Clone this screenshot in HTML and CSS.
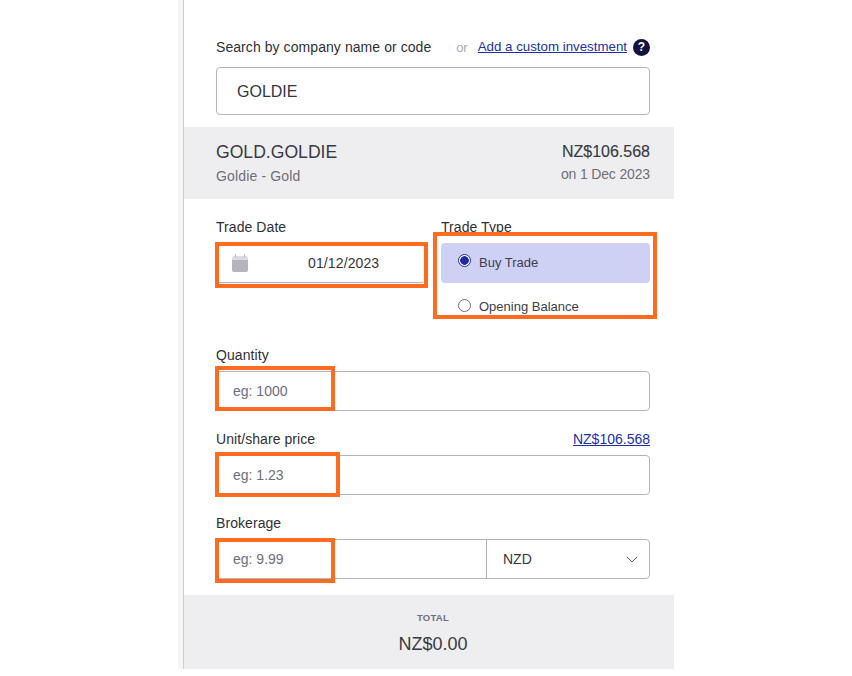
FILE: index.html
```html
<!DOCTYPE html>
<html lang="en">
<head>
<meta charset="utf-8">
<title>Add trade</title>
<link rel="stylesheet" href="styles.css">
</head>
<body>
<main class="panel">
  <section class="section search">
    <div class="label-row">
      <label class="label">Search by company name or code</label>
      <div class="alt">
        <span class="or">or</span>
        <a class="link" href="#">Add a custom investment</a>
        <span class="help">?</span>
      </div>
    </div>
    <div class="field field-search">GOLDIE</div>
  </section>

  <section class="band">
    <div>
      <div class="code">GOLD.GOLDIE</div>
      <div class="sub sub-name">Goldie - Gold</div>
    </div>
    <div class="right">
      <div class="price">NZ$106.568</div>
      <div class="sub sub-date">on 1 Dec 2023</div>
    </div>
  </section>

  <section class="section form">
    <div class="cols">
      <div class="col-date">
        <div class="label">Trade Date</div>
        <div class="date">
          <svg class="cal" width="18" height="20" viewBox="0 0 18 20" aria-hidden="true">
            <path d="M1 5a2 2 0 0 1 2-2h12a2 2 0 0 1 2 2v2H1z" fill="#dcdce1"/>
            <path d="M1 7h16v10a2 2 0 0 1-2 2H3a2 2 0 0 1-2-2z" fill="#b3b4bd"/>
            <rect x="4" y="1" width="1" height="3.5" fill="#b3b4bd"/>
            <rect x="13" y="1" width="1" height="3.5" fill="#b3b4bd"/>
          </svg>
          <span class="date-value">01/12/2023</span>
        </div>
      </div>
      <div class="col-type">
        <div class="label">Trade Type</div>
        <div class="radio radio-on"><span class="dot dot-on"></span><span class="radio-text">Buy Trade</span></div>
        <div class="radio radio-off"><span class="dot"></span><span class="radio-text">Opening Balance</span></div>
      </div>
    </div>

    <div class="label qty-label">Quantity</div>
    <div class="field field-num">eg: 1000</div>

    <div class="label-row price-row">
      <div class="label">Unit/share price</div>
      <a class="link link-price" href="#">NZ$106.568</a>
    </div>
    <div class="field field-num">eg: 1.23</div>

    <div class="label broker-label">Brokerage</div>
    <div class="field broker">
      <div class="broker-input">eg: 9.99</div>
      <div class="currency">NZD
        <svg class="chev" width="12" height="7" viewBox="0 0 12 7" aria-hidden="true"><path d="M.7.7 6 6l5.3-5.3" fill="none" stroke="#55566a" stroke-width="1"/></svg>
      </div>
    </div>
  </section>

  <section class="total">
    <div class="total-label">TOTAL</div>
    <div class="total-value">NZ$0.00</div>
  </section>

  <div class="mark mark-date"></div>
  <div class="mark mark-type"></div>
  <div class="mark mark-qty"></div>
  <div class="mark mark-unit"></div>
  <div class="mark mark-broker"></div>
</main>
</body>
</html>
```
FILE: styles.css
```css
* { box-sizing: border-box; }
html, body { margin: 0; background: #fff; }
body {
  height: 676px;
  overflow: hidden;
  font-family: "Liberation Sans", Arial, sans-serif;
  color: #35353f;
}
.panel {
  position: absolute;
  left: 178px;
  top: 0;
  width: 496px;
  height: 669px;
  border-left: 6px solid #f6f6f7;
  display: flex;
  flex-direction: column;
}
.panel::before {
  content: "";
  position: absolute;
  left: -1px;
  top: 0;
  bottom: 0;
  width: 1px;
  background: #cdcdd3;
}
.section { padding: 0 24px 0 32px; }
.search { padding-top: 38px; height: 127px; }
.label-row { display: flex; justify-content: space-between; align-items: center; height: 18px; }
.label { font-size: 14px; line-height: 18px; color: #2f2f37; letter-spacing: 0.005em; }
.alt { display: flex; align-items: center; }
.or { font-size: 13px; color: #a9a9b2; margin-right: 10px; }
.link { font-size: 13.3px; line-height: 18px; color: #2230a8; text-decoration: underline; }
.link-price { font-size: 14px; }
.help {
  width: 17px;
  height: 17px;
  margin-left: 6px;
  border-radius: 50%;
  background: #12123f;
  color: #fff;
  font-size: 12px;
  font-weight: 700;
  line-height: 17px;
  text-align: center;
}
.field {
  border: 1px solid #b3b3bf;
  border-radius: 4px;
  background: #fff;
}
.field-search {
  height: 48px;
  margin-top: 11px;
  padding-left: 20px;
  font-size: 16px;
  line-height: 47px;
  color: #35353f;
}
.band {
  height: 72px;
  padding: 14px 24px 0 32px;
  background: #eeeef0;
  display: flex;
  justify-content: space-between;
}
.code { font-size: 17.6px; line-height: 22px; color: #3a3a44; }
.price { font-size: 16px; line-height: 20px; padding-top: 1px; color: #3a3a44; -webkit-text-stroke: 0.15px #3a3a44; }
.sub { font-size: 14px; line-height: 18px; color: #6e6e78; }
.sub-name { margin-top: 4px; letter-spacing: 0.15px; }
.sub-date { margin-top: 3px; letter-spacing: -0.15px; }
.right { text-align: right; }
.form { flex: 1; padding-top: 19px; }
.cols { display: flex; height: 128px; }
.col-date { width: 225px; }
.col-type { width: 209px; }
.date {
  height: 40px;
  margin-top: 7px;
  width: 209px;
  border: 1px solid #b3b3bf;
  border-top-color: #fff;
  border-left-color: #fff;
  border-right-color: #fff;
  border-radius: 4px;
  display: flex;
  align-items: center;
  position: relative;
}
.cal { margin-left: 14px; }
.date-value { position: absolute; left: 91px; font-size: 14px; letter-spacing: 0.12px; color: #35353f; }
.radio { display: flex; align-items: center; font-size: 13px; color: #3e3e4c; height: 40px; border-radius: 4px; padding-left: 17px; }
.radio-on { background: #ced1f4; margin-top: 7px; padding-bottom: 5px; }
.radio-on .radio-text { position: relative; top: 2px; }
.radio-off { height: 18px; margin-top: 13px; }
.radio-off .radio-text { position: relative; top: 1px; }
.dot {
  width: 13px;
  height: 13px;
  margin-right: 8px;
  border: 1px solid #6f6f78;
  border-radius: 50%;
  background: #fff;
  flex: none;
}
.dot-on {
  border-color: #2230a8;
  background: radial-gradient(circle, #1c2aa5 0 4px, #fff 4.6px);
}
.qty-label { height: 18px; }
.field-num {
  height: 40px;
  margin-top: 7px;
  padding-left: 16px;
  font-size: 14px;
  line-height: 38px;
  color: #6d6d80;
}
.price-row { margin-top: 19px; }
.broker-label { margin-top: 19px; }
.broker { display: flex; height: 40px; margin-top: 7px; }
.broker-input { width: 270px; padding-left: 16px; font-size: 14px; line-height: 38px; color: #6d6d80; border-right: 1px solid #b3b3bf; }
.currency { flex: 1; display: flex; align-items: center; justify-content: space-between; padding: 0 11px 0 16px; font-size: 14px; color: #35353f; }
.total { height: 74px; padding: 17px 0 0 8px; background: #eeeef0; text-align: center; }
.total-label { font-size: 9.5px; font-weight: 700; line-height: 12px; color: #6d6d80; letter-spacing: 0.03em; }
.total-value { font-size: 18px; line-height: 22px; margin-top: 9px; color: #3a3a44; }
.mark { position: absolute; border: 4px solid #ff6c1f; pointer-events: none; }
.mark-date { left: 31px; top: 242px; width: 213px; height: 46px; }
.mark-type { left: 249px; top: 232px; width: 224px; height: 87px; }
.mark-qty { left: 31px; top: 366px; width: 120px; height: 45px; }
.mark-unit { left: 31px; top: 452px; width: 125px; height: 45px; }
.mark-broker { left: 31px; top: 538px; width: 120px; height: 45px; }
```
